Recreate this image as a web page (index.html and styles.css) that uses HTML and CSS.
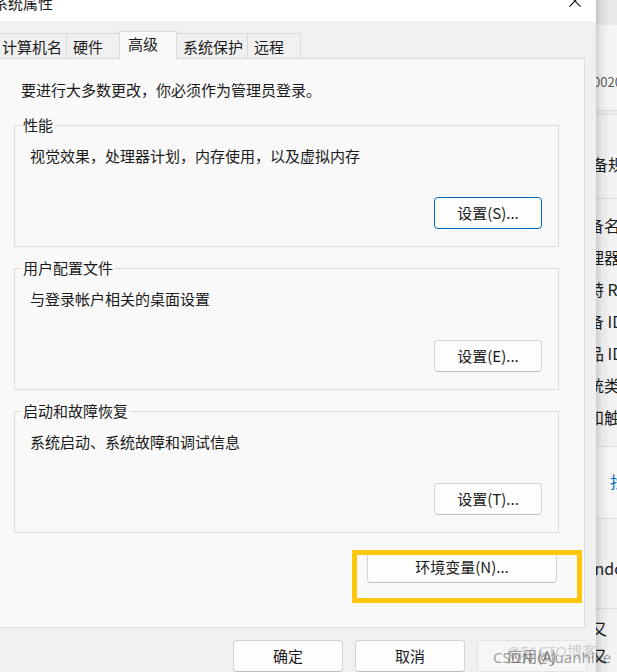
FILE: index.html
```html
<!DOCTYPE html>
<html lang="zh-CN">
<head>
<meta charset="utf-8">
<title>系统属性</title>
<link rel="stylesheet" href="styles.css">
</head>
<body>
<div class="screen">
  <div class="dialog">
    <div class="titlebar">
      <span class="title">系统属性</span>
      <svg class="close" width="12" height="12" viewBox="0 0 12 12" aria-hidden="true">
        <path d="M0.5 0.5 L11.5 11.5 M11.5 0.5 L0.5 11.5" stroke="#1a1a1a" stroke-width="1.1" fill="none"/>
      </svg>
    </div>
    <div class="tabs">
      <div class="tab tab-first">计算机名</div>
      <div class="tab">硬件</div>
      <div class="tab selected">高级</div>
      <div class="tab">系统保护</div>
      <div class="tab">远程</div>
    </div>
    <div class="panel">
      <p class="intro">要进行大多数更改，你必须作为管理员登录。</p>
      <fieldset class="group">
        <legend>性能</legend>
        <p class="desc">视觉效果，处理器计划，内存使用，以及虚拟内存</p>
        <div class="group-actions"><button class="btn btn-set btn-focus">设置(S)...</button></div>
      </fieldset>
      <fieldset class="group">
        <legend>用户配置文件</legend>
        <p class="desc">与登录帐户相关的桌面设置</p>
        <div class="group-actions"><button class="btn btn-set">设置(E)...</button></div>
      </fieldset>
      <fieldset class="group">
        <legend>启动和故障恢复</legend>
        <p class="desc">系统启动、系统故障和调试信息</p>
        <div class="group-actions"><button class="btn btn-set">设置(T)...</button></div>
      </fieldset>
      <div class="env-row"><button class="btn btn-env">环境变量(N)...</button></div>
    </div>
    <div class="footer">
      <button class="btn btn-footer">确定</button>
      <button class="btn btn-footer">取消</button>
      <button class="btn btn-footer" disabled>应用(A)</button>
    </div>
  </div>
  <div class="strip">
    <div class="s-top"></div>
    <div class="s-sec1"><div class="s-num">0020</div></div>
    <div class="s-gap"></div>
    <div class="s-sec2"><div class="s-head">设备规格</div></div>
    <div class="s-rows">
      <div class="s-row">备名</div>
      <div class="s-row">理器</div>
      <div class="s-row">特 R</div>
      <div class="s-row">备 ID</div>
      <div class="s-row">品 ID</div>
      <div class="s-row">统类</div>
      <div class="s-row">和触</div>
    </div>
    <div class="s-link"><span class="s-link-text">找</span></div>
    <div class="s-win"><div class="s-win-text">Windows</div></div>
    <div class="s-last">
      <div class="s-x">又</div>
      <div class="s-x">又</div>
    </div>
  </div>
  <div class="highlight"></div>
  <span class="wm wm-51">@51CTO博客</span>
  <span class="wm wm-csdn">CSDN @Juanhike</span>
</div>
</body>
</html>
```
FILE: styles.css
```css
* { box-sizing: border-box; }

html, body {
  margin: 0;
  padding: 0;
}

body {
  font-family: "Noto Sans CJK SC", "Noto Sans", sans-serif;
  font-size: 15px;
  line-height: 20px;
  color: #1a1a1a;
  background: #f3f3f3;
}

.screen {
  position: relative;
  display: flex;
  width: 617px;
  height: 672px;
  overflow: hidden;
}

/* ---------- dialog ---------- */
.dialog {
  flex: 0 0 596px;
  width: 596px;
  height: 672px;
  display: flex;
  flex-direction: column;
  background: #f0f0f0;
  overflow: hidden;
}

.titlebar {
  flex: 0 0 21px;
  height: 21px;
  background: #ffffff;
  display: flex;
  justify-content: space-between;
  align-items: flex-start;
  overflow: hidden;
}

.title {
  margin-top: -7px;
  margin-left: -7px;
  line-height: 20px;
  white-space: nowrap;
}

.close {
  margin-top: -5px;
  margin-right: 15px;
  flex-shrink: 0;
}

.tabs {
  flex: 0 0 37px;
  height: 37px;
  display: flex;
  align-items: flex-end;
  margin-left: -5px;
}

.tab {
  position: relative;
  border: 1px solid #dadada;
  border-bottom: none;
  background: #f0f0f0;
  padding: 3px 4px 1px 6px;
  min-width: 54px;
  line-height: 20px;
  margin-left: -1px;
  white-space: nowrap;
}

.tab-first { margin-left: 0; }

.tab.selected {
  background: #f9f9f9;
  padding: 2px 4px 5px 8px;
  min-width: 58px;
  margin-bottom: -1px;
  z-index: 2;
}

.panel {
  flex: 0 0 auto;
  background: #f9f9f9;
  border: 1px solid #dcdcdc;
  margin: 0 11px 0 -1px;
  padding: 21px 25px 44px 14px;
}

.intro {
  margin: 0 0 0 7px;
}

.group {
  margin: 15px 0 0;
  border: 1px solid #dcdcdc;
  padding: 0 16px 17px 6px;
  min-width: 0;
}

.group + .group { margin-top: 11px; }

.group legend {
  padding: 0 2px;
  line-height: 20px;
}

.desc {
  margin: 11px 0 0 9px;
}

.group-actions {
  display: flex;
  justify-content: flex-end;
  margin-top: 31px;
}

.btn {
  height: 32px;
  padding: 0;
  border: 1px solid #d3d3d3;
  border-bottom-color: #bfbfbf;
  border-radius: 4px;
  background: #fdfdfd;
  color: #1a1a1a;
  font-family: inherit;
  font-size: 15px;
  line-height: 20px;
}

.btn-set { width: 108px; }

.btn-focus {
  border-color: #0067c0;
  box-shadow: inset 0 0 0 1px #ffffff;
}

.env-row {
  display: flex;
  justify-content: flex-end;
  margin-top: 18px;
  padding-right: 2px;
}

.btn-env { width: 190px; }

.footer {
  flex: 1 1 auto;
  display: flex;
  justify-content: flex-end;
  align-items: flex-start;
  gap: 12px;
  padding: 12px 9px 0 0;
}

.btn-footer { width: 110px; flex-shrink: 0; }

.btn-footer:disabled {
  background: #f6f6f6;
  border-color: #e3e3e3;
  color: #8c8c8c;
}

/* ---------- background window strip ---------- */
.strip {
  position: relative;
  flex: 1 1 auto;
  min-width: 0;
  background: #f3f3f3;
  overflow: hidden;
  white-space: nowrap;
  font-size: 16px;
}

.strip::after {
  content: "";
  position: absolute;
  top: 0;
  left: 0;
  right: 0;
  bottom: 0;
  background: linear-gradient(to right, rgba(0,0,0,0.15), rgba(0,0,0,0.05) 6px, rgba(0,0,0,0) 15px);
  pointer-events: none;
}

.s-top {
  height: 25px;
  background: #e8e8e8;
}

.s-sec1 {
  height: 86px;
  background: #f6f6f6;
  border-bottom: 1px solid #dedede;
  padding-top: 47px;
}

.s-num {
  font-size: 13px;
  line-height: 20px;
  color: #5a5a5a;
  margin-left: -3px;
}

.s-gap {
  height: 4px;
  background: #ececec;
  border-bottom: 1px solid #dedede;
}

.s-sec2 {
  height: 84px;
  border-bottom: 1px solid #dedede;
  padding-top: 39px;
}

.s-head {
  line-height: 20px;
  margin-left: -20px;
}

.s-rows {
  padding: 10px 0 13px;
  border-bottom: 1px solid #dedede;
}

.s-row {
  height: 32px;
  line-height: 32px;
  margin-left: -8px;
}

.s-link {
  height: 72px;
  border-bottom: 1px solid #dedede;
  padding: 24px 0 0 14px;
  background: #f7f7f7;
}

.s-link-text {
  color: #0067c0;
  line-height: 20px;
}

.s-win {
  height: 90px;
  border-bottom: 1px solid #dedede;
  padding-top: 39px;
}

.s-win-text {
  line-height: 20px;
  margin-left: -20px;
}

.s-last {
  padding-top: 6px;
}

.s-x {
  line-height: 27px;
  margin-left: -5px;
}

/* ---------- overlays ---------- */
.highlight {
  position: absolute;
  left: 352px;
  top: 550px;
  width: 230px;
  height: 53px;
  border: 5px solid #ffc60a;
}

.wm {
  position: absolute;
  font-family: "Noto Sans", "Noto Sans CJK SC", sans-serif;
  font-size: 15px;
  line-height: 20px;
  white-space: nowrap;
  pointer-events: none;
}

.wm-51 {
  left: 507px;
  top: 641px;
  color: rgba(190, 190, 190, 0.7);
}

.wm-csdn {
  left: 493px;
  top: 647px;
  color: rgba(80, 80, 80, 0.55);
}
```
